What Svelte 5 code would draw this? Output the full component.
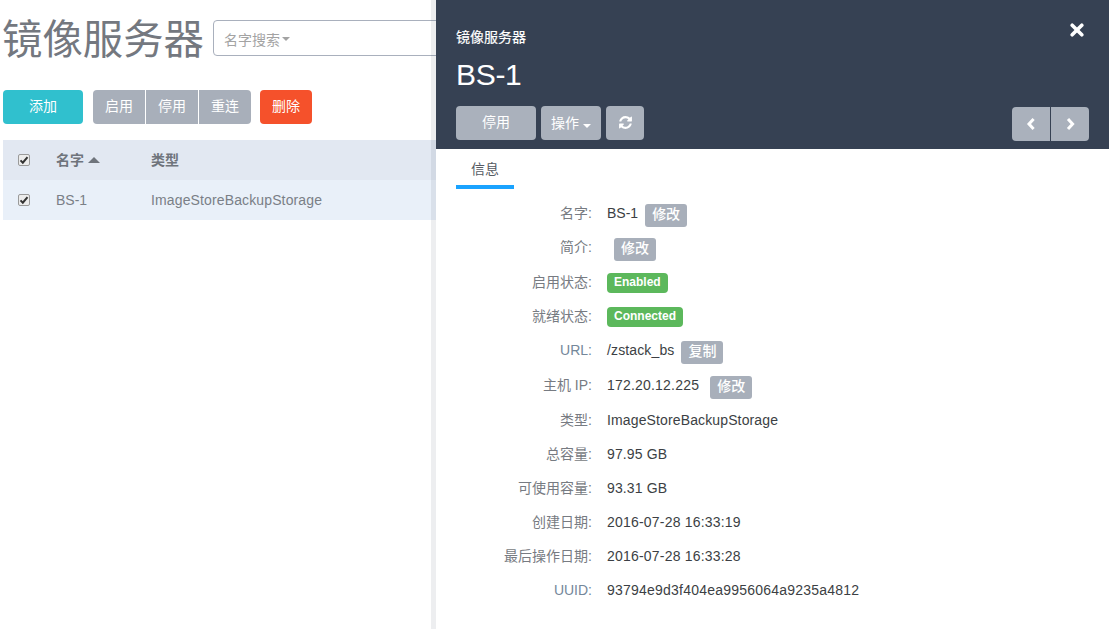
<script>
  const rows = [
    { label: '名字:', value: 'BS-1', edit: '修改', cls: 'r0' },
    { label: '简介:', value: '', edit: '修改', cls: 'r1' },
    { label: '启用状态:', badge: 'Enabled', cls: 'r2' },
    { label: '就绪状态:', badge: 'Connected', cls: 'r3' },
    { label: 'URL:', value: '/zstack_bs', edit: '复制', cls: 'r4', blue: true },
    { label: '主机 IP:', value: '172.20.12.225', edit: '修改', cls: 'r5' },
    { label: '类型:', value: 'ImageStoreBackupStorage', cls: 'r6' },
    { label: '总容量:', value: '97.95 GB', cls: 'r6' },
    { label: '可使用容量:', value: '93.31 GB', cls: 'r6' },
    { label: '创建日期:', value: '2016-07-28 16:33:19', cls: 'r6 date' },
    { label: '最后操作日期:', value: '2016-07-28 16:33:28', cls: 'r6 date' },
    { label: 'UUID:', value: '93794e9d3f404ea9956064a9235a4812', cls: 'r6 uuid', blue: true }
  ];
</script>

{#snippet check()}
  <span class="cb" role="checkbox" aria-checked="true" aria-label="选择" tabindex="0">
    <svg viewBox="0 0 12 12" width="10" height="10"><path d="M1.8 6.4 L4.6 9.2 L10.2 2.6" fill="none" stroke="#333" stroke-width="2.4"/></svg>
  </span>
{/snippet}

<div class="page">
  <main class="left">
    <div class="head">
      <h1>镜像服务器</h1>
      <div class="search"><span>名字搜索</span><i class="caret"></i></div>
    </div>
    <div class="tools">
      <button class="btn add">添加</button>
      <div class="group">
        <button class="btn gray">启用</button>
        <button class="btn gray">停用</button>
        <button class="btn gray">重连</button>
      </div>
      <button class="btn del">删除</button>
    </div>
    <div class="table">
      <div class="tr th">
        <div class="c0">{@render check()}</div>
        <div class="c1">名字 <i class="up"></i></div>
        <div>类型</div>
      </div>
      <div class="tr td">
        <div class="c0">{@render check()}</div>
        <div class="c1">BS-1</div>
        <div class="wide">ImageStoreBackupStorage</div>
      </div>
    </div>
  </main>
  <aside class="panel">
    <header>
      <div class="sub">镜像服务器</div>
      <svg class="close" viewBox="0 0 14 14" width="14" height="14"><path d="M2.2 2.2 L11.8 11.8 M11.8 2.2 L2.2 11.8" stroke="#fff" stroke-width="3.6" stroke-linecap="round"/></svg>
      <div class="name">BS-1</div>
      <div class="actions">
        <button class="hb stop">停用</button>
        <button class="hb op">操作<i class="caret white"></i></button>
        <button class="hb ref" aria-label="刷新">
          <svg viewBox="0 0 1792 1792" width="15" height="15"><path fill="#fff" d="M1639 1056q0 5-1 7-64 268-268 434.5t-478 166.5q-146 0-282.5-55t-243.5-157l-129 129q-19 19-45 19t-45-19-19-45v-448q0-26 19-45t45-19h448q26 0 45 19t19 45-19 45l-137 137q71 66 161 102t187 36q134 0 250-65t186-179q11-17 53-117 8-23 30-23h192q13 0 22.5 9.5t9.5 22.5zm25-800v448q0 26-19 45t-45 19h-448q-26 0-45-19t-19-45 19-45l138-138q-148-137-349-137-134 0-250 65t-186 179q-11 17-53 117-8 23-30 23h-199q-13 0-22.5-9.5t-9.5-22.5v-7q65-268 270-434.5t480-166.5q146 0 284 55.5t245 156.5l130-129q19-19 45-19t45 19 19 45z"/></svg>
        </button>
        <div class="pager">
          <button aria-label="上一个"><svg viewBox="0 0 10 14" width="10" height="14"><path d="M7.6 2 L3 7 L7.6 12" fill="none" stroke="#fff" stroke-width="3"/></svg></button>
          <button aria-label="下一个"><svg viewBox="0 0 10 14" width="10" height="14"><path d="M3 2 L7.6 7 L3 12" fill="none" stroke="#fff" stroke-width="3"/></svg></button>
        </div>
      </div>
    </header>
    <nav><span class="tab">信息</span></nav>
    <dl>
      {#each rows as r}
        <div class="row {r.cls}">
          <dt class:blue={r.blue}>{r.label}</dt>
          <dd>
            {#if r.badge}
              <span class="badge">{r.badge}</span>
            {:else}
              {#if r.value}<span class="val">{r.value}</span>{/if}
              {#if r.edit}<span class="mini">{r.edit}</span>{/if}
            {/if}
          </dd>
        </div>
      {/each}
    </dl>
  </aside>
</div>

<style>
  :global(body) {
    margin: 0;
    font-family: "Liberation Sans", "Noto Sans CJK SC", sans-serif;
    font-size: 14px;
    background: #fff;
  }
  .page {
    display: flex;
    width: 1109px;
    height: 629px;
    overflow: hidden;
  }
  .left {
    position: relative;
    width: 436px;
    flex: none;
    padding-left: 3px;
    box-sizing: border-box;
    overflow: hidden;
  }
  .left::after {
    content: "";
    position: absolute;
    top: 0;
    right: 0;
    bottom: 0;
    width: 5px;
    background: rgba(60, 70, 90, 0.09);
  }
  .head {
    display: flex;
    align-items: flex-start;
    gap: 9px;
    height: 90px;
  }
  h1 {
    margin: 12px 0 0 -1px;
    font-size: 40.4px;
    line-height: 56px;
    font-weight: 400;
    color: #74787f;
    white-space: nowrap;
  }
  .search {
    margin-top: 20px;
    width: 300px;
    height: 36px;
    flex: none;
    box-sizing: border-box;
    border: 1px solid #a9b0bd;
    border-radius: 4px;
    padding: 2px 0 0 10px;
    display: flex;
    align-items: center;
    color: #a3a3a3;
    font-size: 14px;
  }
  .caret {
    display: inline-block;
    width: 0;
    height: 0;
    margin-left: 2px;
    border: 4px solid transparent;
    border-top-color: #a3a3a3;
    border-bottom: 0;
  }
  .caret.white { border-top-color: #fff; margin-left: 4px; }
  .tools {
    display: flex;
    height: 34px;
    gap: 9px;
    margin-bottom: 16px;
  }
  button {
    font: inherit;
    border: 0;
    color: #fff;
    padding: 0;
  }
  .btn {
    height: 34px;
    border-radius: 4px;
    font-size: 14px;
    padding-bottom: 4px;
  }
  .add { width: 80px; background: #30c0ce; margin-right: 1px; }
  .del { width: 52px; background: #f5512b; }
  .group { display: flex; gap: 1px; }
  .gray { width: 52px; background: #a8afba; border-radius: 0; }
  .group .gray:first-child { border-radius: 4px 0 0 4px; }
  .group .gray:last-child { border-radius: 0 4px 4px 0; }
  .tr {
    display: flex;
    align-items: center;
    height: 40px;
    color: #7a7f87;
  }
  .th { background: #e2e8f2; font-weight: 700; color: #6f747c; padding-bottom: 2px; box-sizing: border-box; }
  .td { background: #e9f0f9; }
  .wide { letter-spacing: 0.13px; }
  .c0 { width: 53px; padding-left: 15px; box-sizing: border-box; display: flex; }
  .th .c0 { margin-top: 2px; }
  .cb {
    width: 12px;
    height: 12px;
    box-sizing: border-box;
    border: 1px solid #9a9a9a;
    border-radius: 2px;
    background: #ececec;
    display: flex;
    align-items: center;
    justify-content: center;
  }
  .c1 { width: 95px; }
  .up {
    display: inline-block;
    width: 0;
    height: 0;
    border: 6px solid transparent;
    border-bottom: 6px solid #6f747c;
    border-top: 0;
    vertical-align: 2px;
  }
  .panel {
    width: 673px;
    flex: none;
    background: #fff;
  }
  header {
    position: relative;
    height: 149px;
    box-sizing: border-box;
    background: #364153;
    padding: 27px 20px 0;
    color: #fff;
  }
  .sub { font-size: 14px; line-height: 20px; -webkit-text-stroke: 0.2px #fff; }
  .close { position: absolute; right: 25px; top: 23px; }
  .name { font-size: 30px; line-height: 34px; margin-top: 11px; letter-spacing: -0.3px; }
  .actions {
    display: flex;
    gap: 5px;
    margin-top: 14px;
    align-items: flex-start;
  }
  .hb { height: 34px; background: #aab1bc; border-radius: 4px; font-size: 14px; padding-bottom: 2px; }
  .stop { width: 80px; padding-bottom: 4px; }
  .op { width: 60px; }
  .ref { width: 38px; display: flex; align-items: center; justify-content: center; padding: 0 0 2px; }
  .pager { margin-left: auto; display: flex; gap: 1px; margin-top: 1px; }
  .pager button {
    width: 38px;
    height: 34px;
    background: #aab1bc;
    display: flex;
    align-items: center;
    justify-content: center;
  }
  .pager button:first-child { border-radius: 4px 0 0 4px; }
  .pager button:last-child { border-radius: 0 4px 4px 0; }
  nav { padding: 0 20px; height: 40px; }
  .tab {
    display: block;
    width: 58px;
    box-sizing: border-box;
    height: 40px;
    text-align: center;
    line-height: 41px;
    color: #555a62;
    font-size: 14px;
    border-bottom: 4px solid #1aa3ff;
  }
  dl { margin: 12px 0 0; }
  .row { display: flex; align-items: flex-start; height: 34px; }
  .r1, .r4, .r5 { height: 35px; }
  dt {
    width: 156px;
    text-align: right;
    color: #777b82;
    font-size: 14px;
    line-height: 20px;
    padding-top: 2px;
    flex: none;
  }
  dt.blue { color: #74879a; }
  dd {
    margin: 0 0 0 15px;
    display: flex;
    align-items: flex-start;
    gap: 7px;
    color: #3c3f44;
    font-size: 14px;
    line-height: 20px;
    padding-top: 2px;
    letter-spacing: 0.13px;
  }
  .r0 dd { letter-spacing: 0; }
  .r5 dd { letter-spacing: 0.2px; }
  .date dd { letter-spacing: 0.2px; }
  .uuid dd { letter-spacing: 0.22px; }
  .mini {
    background: #a8afba;
    color: #fff;
    border-radius: 3px;
    font-weight: 500;
    font-size: 14px;
    letter-spacing: 0;
    width: 42px;
    height: 23px;
    line-height: 21px;
    text-align: center;
    margin-top: 1px;
    display: block;
  }
  .r1 dd { padding-left: 7px; }
  .r5 dd { gap: 11px; }
  .badge {
    background: #5cb85c;
    color: #fff;
    font-size: 12px;
    font-weight: 700;
    letter-spacing: 0;
    padding: 0 7px;
    height: 20px;
    line-height: 18px;
    border-radius: 4px;
    display: block;
    margin-top: 1px;
  }
</style>
